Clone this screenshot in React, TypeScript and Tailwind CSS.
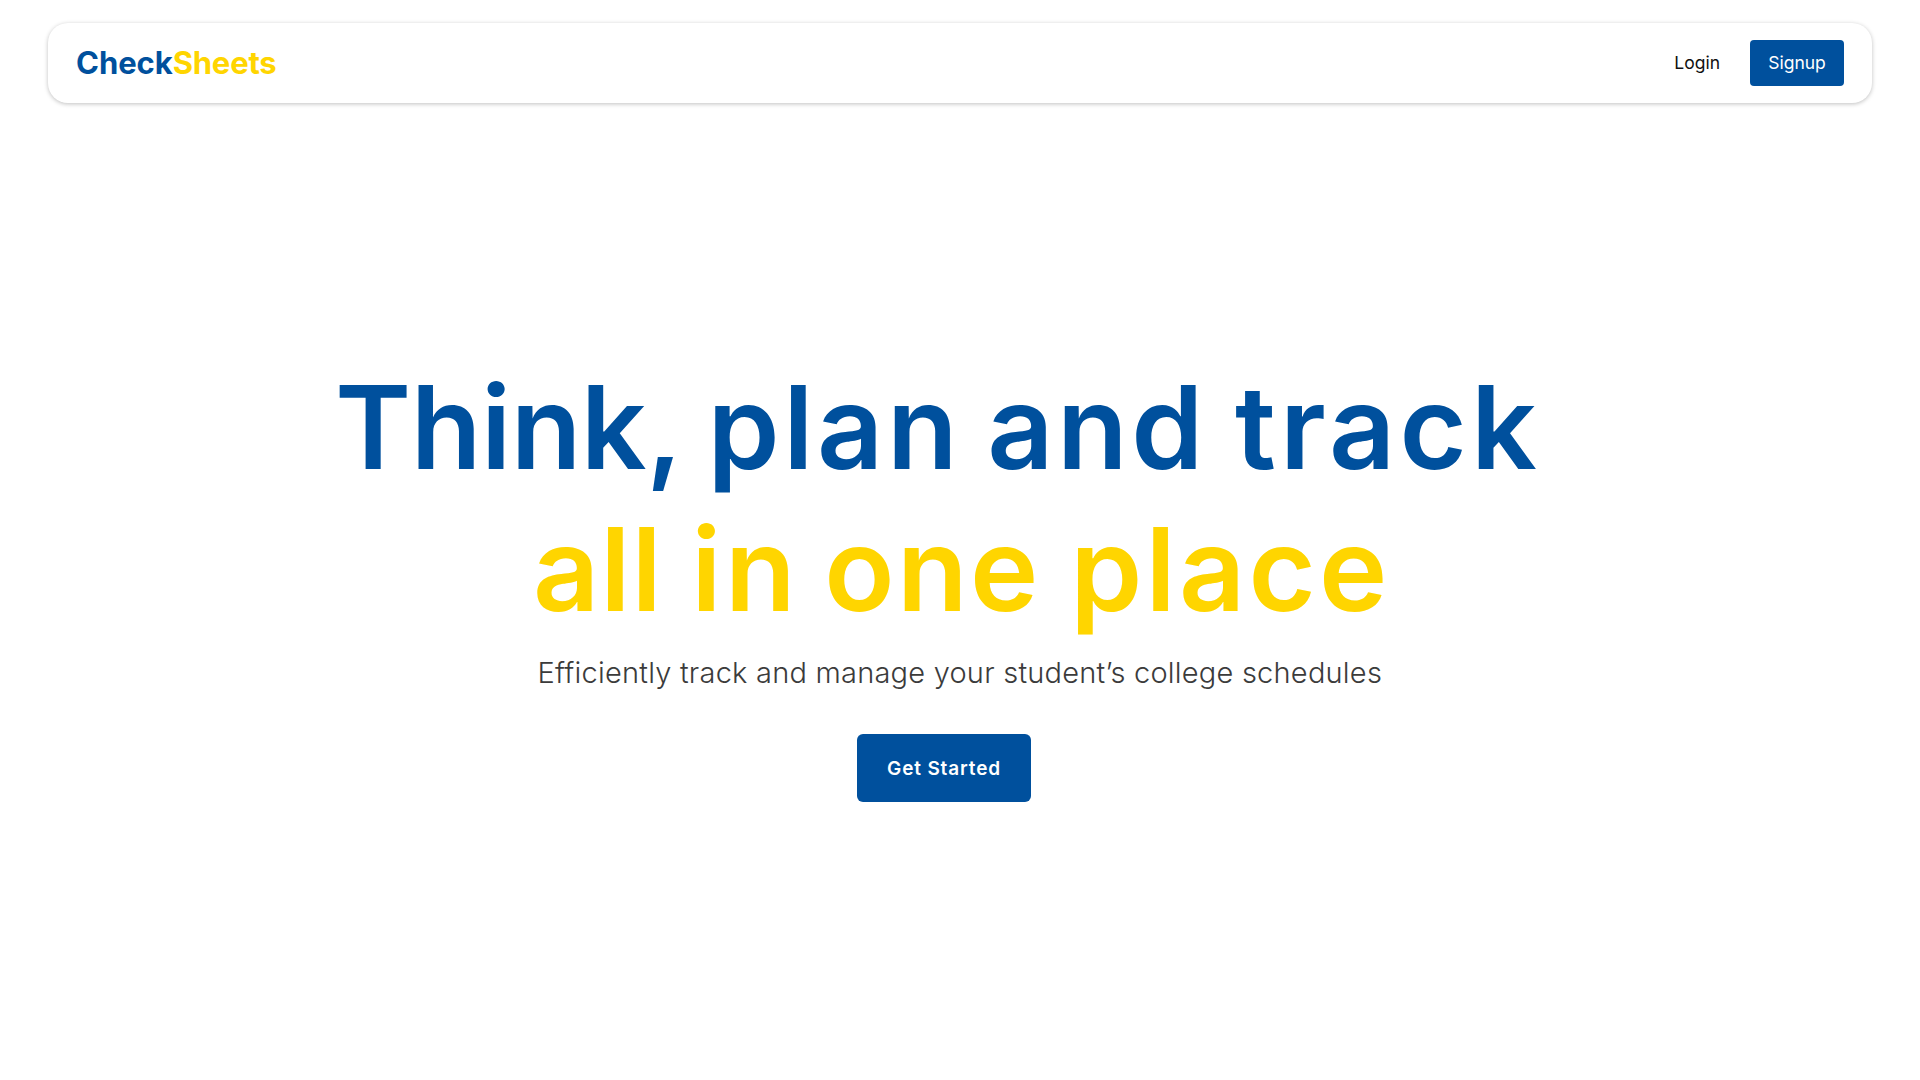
import React from 'react';

type Word = { text: string; className: string };

const firstLine: Word[] = [
  { text: 'Think,', className: 'tracking-[-0.5px]' },
  { text: 'plan', className: 'ml-[25px] tracking-[3.6px]' },
  { text: 'and', className: 'ml-[26px] tracking-[3.6px]' },
  { text: 'track', className: 'ml-[28px] tracking-[4.2px]' },
];

const secondLine: Word[] = [
  { text: 'all', className: 'tracking-[1px]' },
  { text: 'in', className: 'ml-[28.5px] tracking-[3.5px]' },
  { text: 'one', className: 'ml-[25px] tracking-[2.4px]' },
  { text: 'place', className: 'ml-[29.5px] tracking-[3.2px]' },
];

function Line({ words, className }: { words: Word[]; className: string }) {
  return (
    <span className={`flex whitespace-nowrap ${className}`}>
      {words.map((w) => (
        <span key={w.text} className={w.className}>
          {w.text}
        </span>
      ))}
    </span>
  );
}

function Navbar() {
  return (
    <header className="mx-12 mt-[23px] flex h-20 items-center justify-between rounded-[20px] bg-white pr-7 pl-[28px] shadow-[0_1px_4px_rgba(0,0,0,0.25)]">
      <a className="pb-[2px] text-[31px] leading-none font-[650] tracking-[-0.05px] text-[#00509d]">
        Check<span className="tracking-[-0.2px] text-[#ffd500]">Sheets</span>
      </a>
      <nav className="flex items-center text-[17.5px]">
        <a className="mr-[30px] text-[#111111]">Login</a>
        <button className="h-[45.5px] w-[94px] rounded bg-[#00509d] text-white">Signup</button>
      </nav>
    </header>
  );
}

export default function App() {
  return (
    <div className="flex h-screen w-full flex-col overflow-hidden bg-white font-['Inter',sans-serif]">
      <Navbar />
      <main className="mt-[253px] flex flex-col">
        <h1 className="flex flex-col text-[115.5px] leading-[142px] font-[560]">
          <Line words={firstLine} className="ml-[335px] text-[#00509d]" />
          <Line words={secondLine} className="ml-[533px] text-[#ffd500]" />
        </h1>
        <p className="mt-[13px] ml-[537.5px] whitespace-nowrap text-[29px] leading-[40px] font-light tracking-[0.22px] text-[#3b3b3b]">
          Efficiently track and manage your student’s college schedules
        </p>
        <button className="mt-[41px] ml-[857px] h-[68px] w-[174px] rounded-md bg-[#00509d] pt-[2px] text-[19px] font-[560] tracking-[0.85px] text-white">
          Get Started
        </button>
      </main>
    </div>
  );
}
